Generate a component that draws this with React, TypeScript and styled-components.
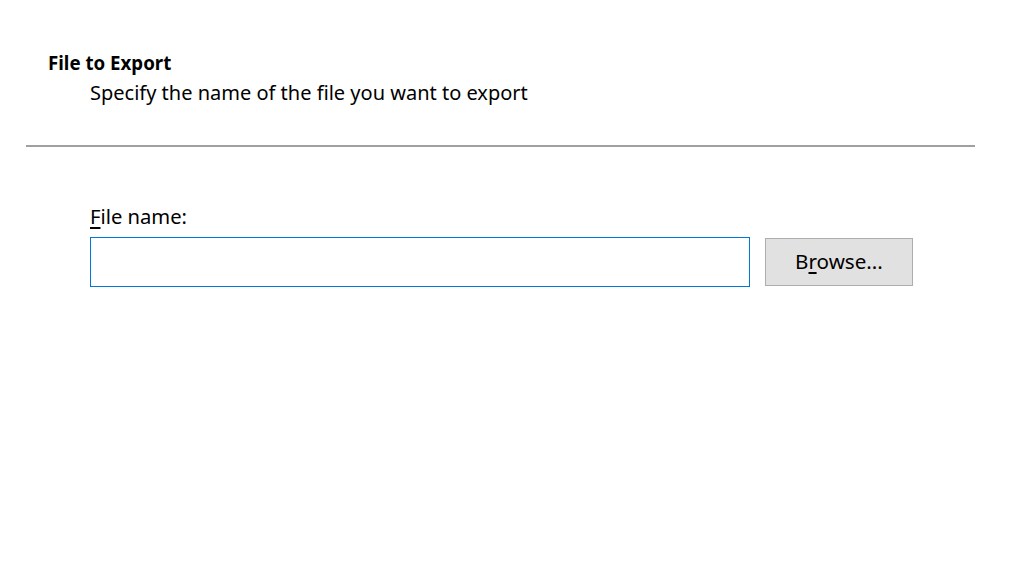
import styled, { createGlobalStyle } from "styled-components";

const GlobalStyle = createGlobalStyle`
  body {
    margin: 0;
    background: #ffffff;
    font-family: "Noto Sans", "Open Sans", sans-serif;
    color: #000000;
  }
`;

const Pagina = styled.div`
  width: 1011px;
  height: 581px;
  background: #ffffff;
  box-sizing: border-box;
`;

const Cabecera = styled.div`
  padding: 51px 0 0 48px;
  height: 145px;
  box-sizing: border-box;
`;

const Titulo = styled.div`
  font-weight: bold;
  font-size: 18.7px;
  line-height: 24px;
`;

const Subtitulo = styled.div`
  margin-left: 42px;
  margin-top: 4px;
  font-size: 20px;
  line-height: 28px;
`;

const Separador = styled.div`
  margin: 0 36px 0 26px;
  height: 2px;
  background: #a0a0a0;
`;

const Cuerpo = styled.div`
  padding: 57px 0 0 90px;
`;

const Etiqueta = styled.div`
  font-size: 20.2px;
  line-height: 24px;
  margin-bottom: 9px;
`;

const Fila = styled.div`
  display: flex;
  align-items: center;
  gap: 15px;
`;

const Entrada = styled.input`
  width: 660px;
  height: 50px;
  border: 1px solid #0078d7;
  box-sizing: border-box;
  outline: none;
  font-size: 20px;
  padding: 0 6px;
  font-family: inherit;
`;

const Boton = styled.button`
  width: 148px;
  height: 48px;
  background: #e1e1e1;
  border: 1px solid #adadad;
  box-sizing: border-box;
  font-family: inherit;
  font-size: 20.6px;
  color: #000000;
  padding: 0 0 2px;
  cursor: pointer;
`;

const Acceso = styled.span`
  text-decoration: underline;
  text-underline-offset: 3px;
`;

const App = () => {
  return (
    <>
      <GlobalStyle />
      <Pagina>
        <Cabecera>
          <Titulo>File to Export</Titulo>
          <Subtitulo>Specify the name of the file you want to export</Subtitulo>
        </Cabecera>
        <Separador />
        <Cuerpo>
          <Etiqueta>
            <Acceso>F</Acceso>ile name:
          </Etiqueta>
          <Fila>
            <Entrada type="text" />
            <Boton>
              B<Acceso>r</Acceso>owse...
            </Boton>
          </Fila>
        </Cuerpo>
      </Pagina>
    </>
  );
};

export default App;
